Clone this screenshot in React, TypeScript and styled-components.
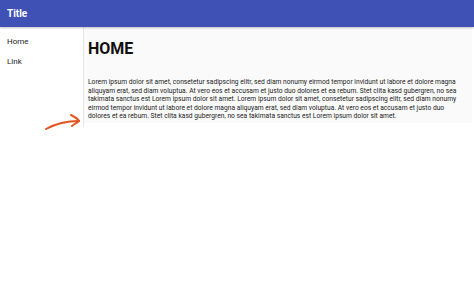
import React from "react";
import styled, { createGlobalStyle } from "styled-components";

const Global = createGlobalStyle`
  html, body { margin: 0; padding: 0; background: #fff; }
  body { font-family: Roboto, "Liberation Sans", Arial, sans-serif; }
`;

const Page = styled.div`
  position: relative;
  width: 474px;
  height: 288px;
  overflow: hidden;
`;

const Header = styled.header`
  height: 27px;
  background: #3f51b5;
  display: flex;
  align-items: center;
  padding: 0 7px;
  box-shadow: 0 1px 2px rgba(0, 0, 0, 0.25);
  position: relative;
  z-index: 1;
`;

const Title = styled.div`
  color: #fff;
  font-weight: 700;
  font-size: 10px;
`;

const Body = styled.div`
  display: flex;
  align-items: flex-start;
  padding-right: 2px;
`;

const Sidebar = styled.nav`
  width: 84px;
  flex: none;
  align-self: stretch;
  border-right: 1px solid #e6e6e6;
  display: flex;
  flex-direction: column;
  padding-top: 10px;
  height: 100px;
  box-sizing: border-box;
`;

const NavItem = styled.a`
  font-size: 8px;
  color: #222;
  padding: 0 7px;
  height: 20px;
  line-height: 10px;
  text-decoration: none;
`;

const Main = styled.main`
  flex: 1;
  background: #fafafa;
  padding: 12px 6px 2px 4px;
`;

const Heading = styled.h1`
  margin: 0 0 19px 0;
  font-size: 16px;
  font-weight: 700;
  color: #111;
  line-height: 20px;
`;

const Paragraph = styled.p`
  margin: 0;
  font-size: 6.7px;
  line-height: 8.6px;
  color: #222;
`;

const Arrow = styled.svg`
  position: absolute;
  left: 43px;
  top: 112px;
`;

const text =
  "Lorem ipsum dolor sit amet, consetetur sadipscing elitr, sed diam nonumy eirmod tempor invidunt ut labore et dolore magna aliquyam erat, sed diam voluptua. At vero eos et accusam et justo duo dolores et ea rebum. Stet clita kasd gubergren, no sea takimata sanctus est Lorem ipsum dolor sit amet. Lorem ipsum dolor sit amet, consetetur sadipscing elitr, sed diam nonumy eirmod tempor invidunt ut labore et dolore magna aliquyam erat, sed diam voluptua. At vero eos et accusam et justo duo dolores et ea rebum. Stet clita kasd gubergren, no sea takimata sanctus est Lorem ipsum dolor sit amet.";

export default function App() {
  return (
    <Page>
      <Global />
      <Header>
        <Title>Title</Title>
      </Header>
      <Body>
        <Sidebar>
          <NavItem>Home</NavItem>
          <NavItem>Link</NavItem>
        </Sidebar>
        <Main>
          <Heading>HOME</Heading>
          <Paragraph>{text}</Paragraph>
        </Main>
      </Body>
      <Arrow width="40" height="20" viewBox="0 0 40 20">
        <path d="M3 17 C 12 12, 24 9, 36 9" fill="none" stroke="#e2541f" strokeWidth="2" strokeLinecap="round" />
        <path d="M28 3 C 32 5, 35 7, 36 9 C 34 11, 31 12, 29 14" fill="none" stroke="#e2541f" strokeWidth="2" strokeLinecap="round" strokeLinejoin="round" />
      </Arrow>
    </Page>
  );
}
